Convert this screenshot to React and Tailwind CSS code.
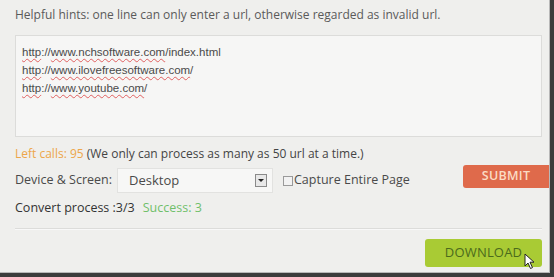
import React from "react";

const sq = "underline decoration-wavy decoration-[#e06060] decoration-[1px] underline-offset-[2px]";

function Url({ parts }) {
  return (
    <div className="h-[18px] leading-[18px]">
      {parts.map((p, i) =>
        p.s ? (
          <span key={i} className={sq}>{p.t}</span>
        ) : (
          <span key={i}>{p.t}</span>
        )
      )}
    </div>
  );
}

export default function App() {
  return (
    <div className="w-[554px] h-[277px] overflow-hidden bg-[#3c3c3c]">
      <div
        className="w-[550px] h-[273px] bg-[#efefed] border-r border-b border-[#b8b8b8] flex flex-col pl-[15px] pr-[8px] text-[#555]"
        style={{ fontFamily: "'Open Sans', 'Noto Sans', sans-serif" }}
      >
        <div className="pt-[6px] h-[35px] text-[12px] leading-[18px] text-[#5a5a5a]">
          Helpful hints: one line can only enter a url, otherwise regarded as invalid url.
        </div>
        <div
          className="w-[527px] h-[102px] shrink-0 bg-[#f6f6f5] border border-[#dcdcda] pl-[6px] pt-[7px] text-[11.5px] text-[#4a4a4a]"
          style={{ fontFamily: "'Liberation Sans', Arial, sans-serif" }}
        >
          <Url parts={[{ t: "http", s: true }, { t: "://" }, { t: "www.nchsoftware.com", s: true }, { t: "/index.html" }]} />
          <Url parts={[{ t: "http", s: true }, { t: "://" }, { t: "www.ilovefreesoftware.com", s: true }, { t: "/" }]} />
          <Url parts={[{ t: "http", s: true }, { t: "://" }, { t: "www.youtube.com", s: true }, { t: "/" }]} />
        </div>
        <div className="mt-[8px] h-[18px] leading-[18px] text-[12px] text-[#444] shrink-0">
          <span className="text-[#eda64a]">Left calls: 95</span> (We only can process as many as 50 url at a time.)
        </div>
        <div className="mt-[5px] h-[25px] shrink-0 flex items-center text-[12.5px] text-[#4a4a4a]">
          <span className="w-[102px]">Device &amp; Screen:</span>
          <div className="w-[156px] h-[25px] bg-[#f7f7f6] border border-[#e2e2e0] flex items-center justify-between pl-[11px] pr-[5px]">
            <span className="text-[13px] text-[#4a4a4a]">Desktop</span>
            <div className="w-[12px] h-[13px] border border-[#8a8a8a] bg-[#e8e8e8] flex items-center justify-center">
              <div className="w-0 h-0 border-l-[3px] border-r-[3px] border-t-[3px] border-l-transparent border-r-transparent border-t-[#222]" />
            </div>
          </div>
          <div className="ml-[10px] w-[10px] h-[10px] border border-[#9a9a9a] bg-[#f2f2f2]" />
          <span className="ml-[1px] text-[12.5px] text-[#4a4a4a]">Capture Entire Page</span>
          <div className="ml-auto -mr-[8px] self-start -mt-[3px] w-[86px] h-[23px] rounded-l-[3px] bg-[#df6a4b] flex items-center justify-center text-[12.5px] font-semibold text-[#fbdcc4] tracking-[0.3px]">
            SUBMIT
          </div>
        </div>
        <div className="mt-[6px] h-[18px] leading-[18px] text-[12.5px] text-[#333] shrink-0">
          Convert process :3/3
          <span className="ml-[8px] text-[#6fbf6a]">Success: 3</span>
        </div>
        <div className="mt-[11px] w-[527px] h-[2px] shrink-0 bg-[#dcdcda] border-b border-[#f8f8f8]" />
        <div className="mt-[9px] flex justify-end w-[527px] shrink-0">
          <div className="relative w-[117px] h-[28px] rounded-[3px] bg-[#a9cb34] flex items-center justify-center text-[13px] text-[#4b6a1c] tracking-[0.2px]">
            DOWNLOAD
            <svg className="absolute left-[99px] top-[14px]" width="12" height="17" viewBox="0 0 12 17">
              <path d="M1 1 L1 13 L4 10 L6.5 15.5 L8.5 14.6 L6 9.2 L10 9.2 Z" fill="#fff" stroke="#222" strokeWidth="1" strokeLinejoin="round" />
            </svg>
          </div>
        </div>
      </div>
    </div>
  );
}
